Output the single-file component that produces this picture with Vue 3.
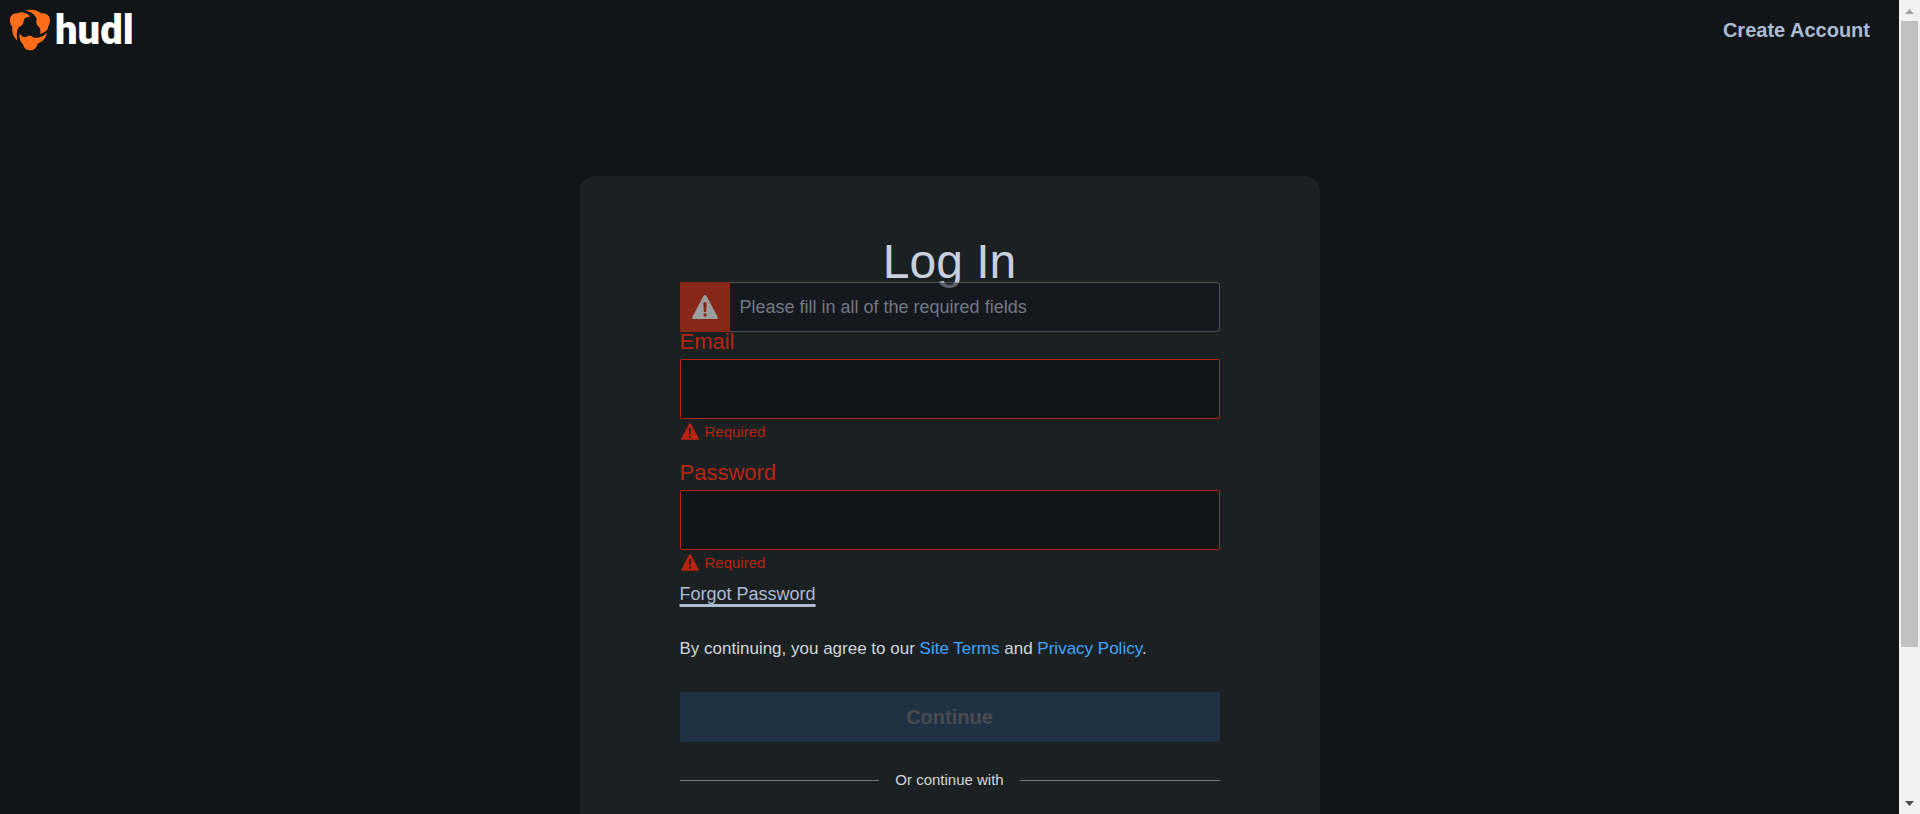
<script setup>
import { ref } from 'vue'

const fields = ref([
  { id: 'email', label: 'Email', type: 'email', value: '' },
  { id: 'password', label: 'Password', type: 'password', value: '' },
])
</script>

<template>
  <div class="window">
    <div class="page">
      <header class="topbar">
        <a class="brand" href="#" aria-label="hudl home">
          <svg class="mark" viewBox="0 0 144 144" aria-hidden="true">
            <path d="M12 42C12 29 22 20 36 22C41 17 60 16 73 32C60 32 53 38 53 46C52 56 46 60 38 64C32 72 31 86 34 103C23 94 17 80 19 62C13 57 12 50 12 42Z" />
            <path d="M58 14C72 9 94 11 105 22C120 19 132 29 132 43C132 54 128 58 126 63C127 71 118 79 102 84C105 76 104 68 97 61C90 55 90 47 92 38C86 24 74 16 58 14Z" />
            <path d="M41 81C44 89 50 93 58 94C64 89 72 88 78 91C82 96 88 96 95 95C107 93 117 88 123 80C121 94 111 106 95 113C91 124 86 133 72 133C58 133 54 124 51 115C42 108 39 96 41 81Z" />
          </svg>
          <span class="wordmark">hudl</span>
        </a>
        <a class="create" href="#">Create Account</a>
      </header>

      <main class="card">
        <h1>Log In</h1>
        <div class="notice" role="alert">
          <span class="notice-icon">
            <svg viewBox="0 0 26 24" aria-hidden="true">
              <path fill-rule="evenodd" d="M11.500 1Q13-1 14.500 1L25.700 22Q26.500 24 24.500 24H1.500Q-.5 24 .3 22ZM11.300 8L11.900 17H14.100L14.700 8Q13 6 11.300 8ZM13 18.200A1.700 1.700 0 1 0 13 21.600A1.700 1.700 0 1 0 13 18.200Z" />
            </svg>
          </span>
          <p>Please fill in all of the required fields</p>
        </div>

        <form class="form" @submit.prevent>
          <div v-for="f in fields" :key="f.id" class="field">
            <label :for="f.id">{{ f.label }}</label>
            <input :id="f.id" v-model="f.value" :type="f.type" :aria-describedby="f.id + '-error'" aria-invalid="true" />
            <p :id="f.id + '-error'" class="error">
              <svg viewBox="0 0 26 24" aria-hidden="true">
                <path fill-rule="evenodd" d="M11.500 1Q13-1 14.500 1L25.700 22Q26.500 24 24.500 24H1.500Q-.5 24 .3 22ZM11.400 7L11.900 16H14.100L14.600 7ZM11.600 18V21H14.400V18Z" />
              </svg>
              Required
            </p>
          </div>
          <a class="forgot" href="#">Forgot Password</a>
          <p class="terms">
            By continuing, you agree to our <a href="#">Site Terms</a> and <a href="#">Privacy Policy</a>.
          </p>
          <button class="continue" type="submit" disabled>Continue</button>
        </form>
        <div class="divider">Or continue with</div>
      </main>
    </div>

    <div class="scrollbar" aria-hidden="true">
      <svg class="arrow up" viewBox="0 0 9 5"><path d="M0 5L4.500 0L9 5Z" /></svg>
      <div class="track"><div class="thumb"></div></div>
      <svg class="arrow down" viewBox="0 0 9 5"><path d="M0 0L4.500 5L9 0Z" /></svg>
    </div>
  </div>
</template>

<style>
body {
  margin: 0;
  background: #111518;
}
</style>

<style scoped>
* {
  box-sizing: border-box;
}
h1,
p {
  margin: 0;
}
.window {
  display: flex;
  height: 100vh;
  overflow: hidden;
  font-family: "Liberation Sans", Arial, sans-serif;
  color: #c8cfde;
  background: #111518;
}
.page {
  flex: 1;
  min-width: 0;
  overflow: hidden;
}
.topbar {
  display: flex;
  align-items: center;
  justify-content: space-between;
  height: 60px;
  padding: 0 29px 0 6px;
}
.brand {
  display: flex;
  align-items: center;
  gap: 1px;
  color: #fff;
  text-decoration: none;
}
.mark {
  width: 48px;
  height: 48px;
  fill: #ff6d1a;
}
.wordmark {
  padding-top: 2px;
  font: 900 40px/42px Roboto, "Liberation Sans", sans-serif;
}
.create {
  color: #abbbd1;
  font-size: 20px;
  font-weight: 700;
  line-height: 24px;
  text-decoration: none;
}
.card {
  max-width: 740px;
  margin: 116px auto 0;
  padding: 60px 100px;
  border-radius: 15px;
  background: #1b2023;
}
h1 {
  font-size: 48px;
  font-weight: 400;
  line-height: 52px;
  text-align: center;
}
.notice {
  position: relative;
  display: flex;
  align-items: center;
  height: 50px;
  margin-top: -6px;
  border: 1px solid #6f7376;
  border-left: 0;
  border-radius: 4px;
  background: #12141b;
  opacity: 0.6;
}
.notice-icon {
  display: grid;
  place-items: center;
  width: 50px;
  height: 50px;
  margin: -1px 10px -1px 0;
  background: #d02c12;
}
.notice-icon svg {
  width: 26px;
  height: 24px;
  fill: #f0f2f3;
}
.notice p {
  font-size: 18px;
  line-height: 24px;
  color: #acb2c1;
}
.form {
  display: flex;
  flex-direction: column;
  margin-top: -2px;
}
.field {
  display: flex;
  flex-direction: column;
  color: #b72410;
}
.field + .field {
  margin-top: 16px;
}
label {
  margin-bottom: 5px;
  font-size: 22px;
  line-height: 24px;
}
input {
  width: 100%;
  height: 60px;
  padding: 0 16px;
  border: 1px solid #b72410;
  border-radius: 2px;
  background: #111518;
  color: #c8cfde;
  font: 18px "Liberation Sans", Arial, sans-serif;
}
.error {
  display: flex;
  align-items: center;
  gap: 6px;
  padding-left: 1px;
  font-size: 15px;
  line-height: 26px;
}
.error svg {
  width: 18px;
  height: 17px;
  margin-bottom: 2px;
  fill: #b72410;
}
.forgot {
  align-self: flex-start;
  margin-top: 6px;
  color: #abbbd1;
  font-size: 18px;
  line-height: 24px;
  text-decoration: underline;
  text-decoration-thickness: 3px;
  text-underline-offset: 4px;
}
.terms {
  margin-top: 31px;
  color: #d2d6db;
  font-size: 17px;
  line-height: 24px;
}
.terms a {
  color: #3fa6ff;
  text-decoration: none;
}
.continue {
  height: 50px;
  margin-top: 31px;
  border: 0;
  border-radius: 2px;
  background: #203144;
  color: #484c50;
  font: 700 20px "Liberation Sans", Arial, sans-serif;
}
.divider {
  display: flex;
  align-items: center;
  gap: 16px;
  margin-top: 28px;
  color: #d2d6db;
  font-size: 15px;
  line-height: 20px;
}
.divider::before,
.divider::after {
  content: "";
  flex: 1;
  height: 1px;
  background: #72777c;
}
.scrollbar {
  display: flex;
  flex-direction: column;
  align-items: center;
  width: 21px;
  padding: 9px 2px 8px;
  background: #f1f1f1;
}
.arrow {
  width: 9px;
  height: 5px;
  fill: #a3a3a3;
}
.down {
  fill: #505050;
}
.track {
  flex: 1;
  width: 17px;
  margin: 7px 0;
}
.thumb {
  height: 81%;
  background: #c1c1c1;
}
</style>
